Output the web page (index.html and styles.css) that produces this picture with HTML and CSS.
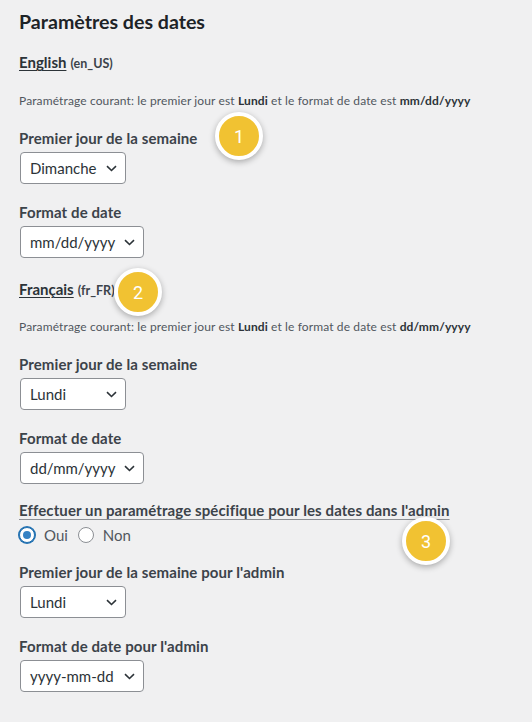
FILE: index.html
```html
<!DOCTYPE html>
<html lang="fr">
<head>
<meta charset="utf-8">
<title>Paramètres des dates</title>
<link rel="stylesheet" href="styles.css">
</head>
<body>
<main class="page">
  <h2 class="title">Paramètres des dates</h2>

  <div class="lang"><span class="lang-name">English</span> <span class="lang-code">(en_US)</span></div>
  <p class="current">Paramétrage courant: le premier jour est <b>Lundi</b> et le format de date est <b>mm/dd/yyyy</b></p>

  <div class="field">
    <div class="label">Premier jour de la semaine</div>
    <div class="select narrow"><span>Dimanche</span><svg class="chev" width="11" height="7" viewBox="0 0 11 7"><path d="M1 1.2 L5.5 5.5 L10 1.2" fill="none" stroke="#2c3338" stroke-width="1.6"/></svg></div>
  </div>
  <div class="field">
    <div class="label">Format de date</div>
    <div class="select wide"><span>mm/dd/yyyy</span><svg class="chev" width="11" height="7" viewBox="0 0 11 7"><path d="M1 1.2 L5.5 5.5 L10 1.2" fill="none" stroke="#2c3338" stroke-width="1.6"/></svg></div>
  </div>

  <div class="lang lang-fr"><span class="lang-name">Français</span> <span class="lang-code">(fr_FR)</span></div>
  <p class="current">Paramétrage courant: le premier jour est <b>Lundi</b> et le format de date est <b>dd/mm/yyyy</b></p>

  <div class="field">
    <div class="label">Premier jour de la semaine</div>
    <div class="select narrow"><span>Lundi</span><svg class="chev" width="11" height="7" viewBox="0 0 11 7"><path d="M1 1.2 L5.5 5.5 L10 1.2" fill="none" stroke="#2c3338" stroke-width="1.6"/></svg></div>
  </div>
  <div class="field">
    <div class="label">Format de date</div>
    <div class="select wide"><span>dd/mm/yyyy</span><svg class="chev" width="11" height="7" viewBox="0 0 11 7"><path d="M1 1.2 L5.5 5.5 L10 1.2" fill="none" stroke="#2c3338" stroke-width="1.6"/></svg></div>
  </div>

  <div class="specific">Effectuer un paramétrage spécifique pour les dates dans l'admin</div>
  <div class="radios">
    <label class="radio"><input type="radio" name="admin" class="radio-input checked" checked><span>Oui</span></label>
    <label class="radio"><input type="radio" name="admin" class="radio-input"><span>Non</span></label>
  </div>

  <div class="field after-radios">
    <div class="label">Premier jour de la semaine pour l'admin</div>
    <div class="select narrow"><span>Lundi</span><svg class="chev" width="11" height="7" viewBox="0 0 11 7"><path d="M1 1.2 L5.5 5.5 L10 1.2" fill="none" stroke="#2c3338" stroke-width="1.6"/></svg></div>
  </div>
  <div class="field">
    <div class="label">Format de date pour l'admin</div>
    <div class="select wide"><span>yyyy-mm-dd</span><svg class="chev" width="11" height="7" viewBox="0 0 11 7"><path d="M1 1.2 L5.5 5.5 L10 1.2" fill="none" stroke="#2c3338" stroke-width="1.6"/></svg></div>
  </div>

  <div class="badge b1">1</div>
  <div class="badge b2">2</div>
  <div class="badge b3">3</div>
</main>
</body>
</html>
```

FILE: styles.css
```css
* { box-sizing: border-box; }
html, body {
  margin: 0;
  background: #f0f0f1;
}
body {
  font-family: Lato, "Noto Sans", sans-serif;
  color: #3c434a;
  width: 532px;
  height: 722px;
  overflow: hidden;
}
.page {
  position: relative;
  padding: 9px 0 0 19px;
  height: 722px;
}
.title {
  margin: 0;
  font-size: 19.6px;
  line-height: 26px;
  font-weight: 700;
  color: #1d2327;
}
.lang {
  margin-top: 17px;
  line-height: 20px;
  height: 20px;
  color: #2c3338;
}
.lang-fr { margin-top: 21px; }
.lang-name {
  font-size: 15px;
  font-weight: 700;
  text-decoration: underline;
  text-underline-offset: 2px;
  text-decoration-thickness: 1px;
}
.lang-code {
  font-size: 12.5px;
  font-weight: 700;
  color: #3c434a;
}
.current {
  margin: 20px 0 0;
  font-size: 12px;
  letter-spacing: 0.12px;
  line-height: 18px;
  color: #50575e;
}
.lang-fr + .current { margin-top: 19px; }
.current b {
  color: #2c3338;
  font-weight: 700;
}
.field { margin-top: 18px; }
.field.after-radios { margin-top: 17px; }
.label {
  font-size: 15px;
  letter-spacing: 0.1px;
  line-height: 20px;
  font-weight: 700;
  color: #3c434a;
  margin-bottom: 4px;
}
.select {
  display: flex;
  align-items: center;
  justify-content: space-between;
  height: 32px;
  margin-left: 1px;
  padding: 0 8px 0 9px;
  background: #fff;
  border: 1px solid #8c8f94;
  border-radius: 4px;
  font-size: 15px;
  color: #2c3338;
}
.select.narrow { width: 106px; }
.select.wide { width: 124px; }
.chev { flex: none; }
.specific {
  margin-top: 16px;
  font-size: 15px;
  letter-spacing: 0.1px;
  line-height: 20px;
  font-weight: 700;
  color: #3c434a;
  text-decoration: underline;
  text-decoration-color: #8c8f94;
  text-underline-offset: 3px;
  text-decoration-skip-ink: auto;
}
.radios {
  display: flex;
  gap: 10px;
  margin-top: 5px;
  height: 20px;
  align-items: center;
}
.radio {
  display: inline-flex;
  align-items: center;
  gap: 9px;
  font-size: 15px;
  color: #50575e;
}
.radio-input {
  appearance: none;
  -webkit-appearance: none;
  margin: 0;
  width: 16px;
  height: 16px;
  border: 1px solid #8c8f94;
  border-radius: 50%;
  background: #fff;
  display: grid;
  place-items: center;
}
.radio-input.checked {
  border-color: #2271b1;
  box-shadow: 0 0 0 1px #2271b1;
}
.radio-input.checked::before {
  content: "";
  width: 8px;
  height: 8px;
  border-radius: 50%;
  background: #3582c4;
}
.badge {
  position: absolute;
  width: 48px;
  height: 48px;
  border-radius: 50%;
  background: #f1c232;
  border: 4px solid #fff;
  box-shadow: 0 2px 6px rgba(0, 0, 0, 0.3);
  color: #fff;
  font-family: Roboto, "Noto Sans", sans-serif;
  font-size: 18px;
  display: flex;
  align-items: center;
  justify-content: center;
}
.b1 { left: 215px; top: 112px; }
.b2 { left: 114px; top: 268px; }
.b3 { left: 402px; top: 517px; }
```
